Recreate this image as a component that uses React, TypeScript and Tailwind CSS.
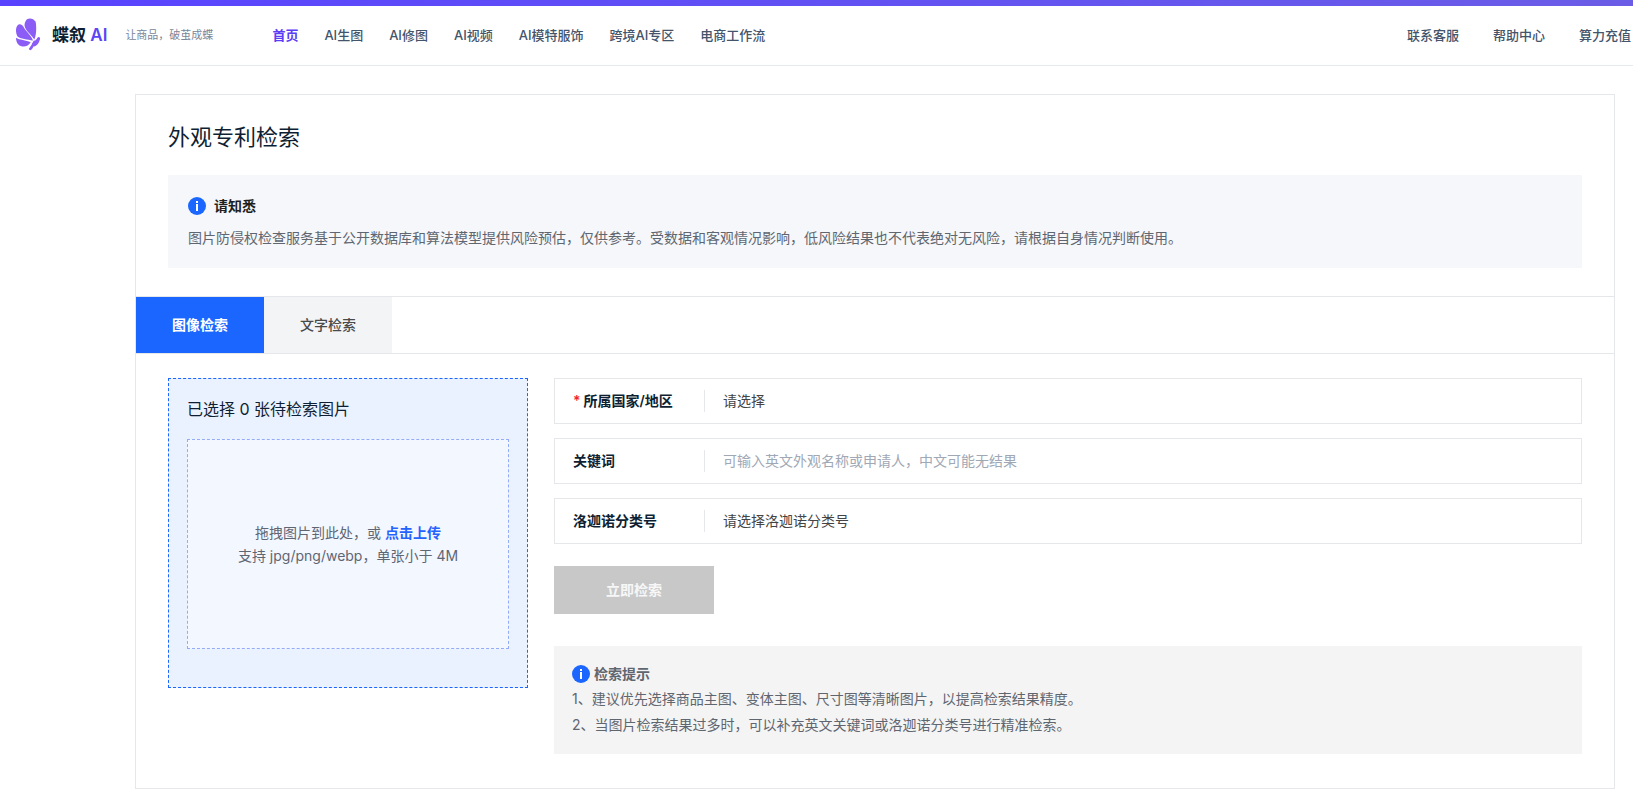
import type { ReactNode } from "react";

const navItems = ["首页", "AI生图", "AI修图", "AI视频", "AI模特服饰", "跨境AI专区", "电商工作流"];
const helpItems = ["联系客服", "帮助中心", "算力充值"];

function Logo() {
  return (
    <svg className="h-[33px] w-7" viewBox="48 56 84 98" fill="#8b5cf6" aria-hidden="true">
      <path d="M76 67C79 54 99 53 107 67C110 84 109 106 103 120C96 107 77 94 74 80C73 75 74 71 76 67Z" />
      <path d="M53 77C60 71 68 77 73 86C80 98 94 107 99 123C84 119 60 119 52 110C46 99 47 83 53 77Z" />
      <path d="M48 115C58 122 78 122 92 128C87 137 78 142 67 141C54 139 48 128 48 115Z" />
      <path
        d="M91 148C96 143 97 137 104 130C109 126 113 122 116 117"
        fill="none"
        stroke="#8b5cf6"
        strokeWidth="8"
        strokeLinecap="round"
      />
      <path d="M95 134L102 122L107 126L117 114L120 118C118 128 113 138 103 141Z" />
    </svg>
  );
}

function InfoIcon() {
  return (
    <svg className="size-[18px] shrink-0" viewBox="0 0 18 18" aria-hidden="true">
      <circle cx="9" cy="9" r="9" fill="#1a66ff" />
      <rect x="8" y="4" width="2" height="2" fill="#fff" />
      <rect x="8" y="7" width="2" height="7" fill="#fff" />
    </svg>
  );
}

function Header() {
  return (
    <header>
      <div className="h-1.5 bg-linear-to-r from-[#5842ff] to-[#6b5ce7]" />
      <div className="flex h-[60px] items-center border-b border-[#e5e9f0] pl-4 pr-[2px] pb-[2px]">
        <a href="#" className="flex items-center">
          <Logo />
          <span className="ml-2 text-[17px] font-semibold text-[#0f1f33]">
            蝶叙 <span className="text-[#5b45f5]">AI</span>
          </span>
        </a>
        <span className="ml-[18px] text-[11px] text-[#7b8698]">让商品，破茧成蝶</span>

        <nav className="ml-[59px] flex gap-[26px] text-[13px] font-medium text-[#43546b]">
          {navItems.map((item, i) => (
            <a key={item} href="#" className={i === 0 ? "font-semibold text-[#5b3df5]" : "hover:text-[#5b3df5]"}>
              {item}
            </a>
          ))}
        </nav>

        <div className="ml-auto flex gap-[34px] text-[13px] font-medium text-[#43546b]">
          {helpItems.map((item) => (
            <a key={item} href="#" className="hover:text-[#5b3df5]">
              {item}
            </a>
          ))}
        </div>
      </div>
    </header>
  );
}

function Field({ id, label, required, children }: { id: string; label: string; required?: boolean; children: ReactNode }) {
  return (
    <div className="flex h-[46px] items-center border border-[#e5e7eb] px-[18px]">
      <label htmlFor={id} className="w-[131px] shrink-0 font-semibold text-[#0f1f33]">
        {required && <span className="mr-[3px] text-[#f5222d]">*</span>}
        {label}
      </label>
      <div className="flex h-[22px] flex-1 items-center border-l border-[#e5e7eb] pl-[18px]">{children}</div>
    </div>
  );
}

export default function App() {
  return (
    <div className="min-h-screen bg-white font-[Inter,'Noto_Sans_CJK_SC',sans-serif] text-[14px] leading-[22px]">
      <Header />

      <main className="mt-7 ml-[135px] mr-[18px] border border-[#e5e7eb]">
        <section className="px-8 pt-6 pb-7">
          <h1 className="text-[22px] leading-9 text-[#0f1f33]">外观专利检索</h1>
          <div className="mt-5 bg-[#f5f7fa] px-5 pt-5 pb-[18px]">
            <div className="flex items-center gap-2 font-semibold text-[#1f1f1f]">
              <InfoIcon />
              请知悉
            </div>
            <p className="mt-[9px] leading-6 text-[#5f6670]">
              图片防侵权检查服务基于公开数据库和算法模型提供风险预估，仅供参考。受数据和客观情况影响，低风险结果也不代表绝对无风险，请根据自身情况判断使用。
            </p>
          </div>
        </section>

        <div className="flex h-[58px] border-y border-[#e5e7eb]" role="tablist">
          <button role="tab" aria-selected="true" className="w-32 bg-[#1a66ff] font-semibold text-white">
            图像检索
          </button>
          <button role="tab" aria-selected="false" className="w-32 bg-[#f3f4f6] font-medium text-[#4a4a4a]">
            文字检索
          </button>
        </div>

        <section className="flex items-start gap-[26px] px-8 pt-6 pb-[34px]">
          <div className="h-[310px] w-[360px] shrink-0 border border-dashed border-[#1a66ff] bg-[#eaf1ff] p-[18px]">
            <h2 className="text-base leading-6 text-[#0f1f33]">已选择 0 张待检索图片</h2>
            <div className="mt-[18px] flex h-[210px] flex-col items-center justify-center border border-dashed border-[#93abf8] bg-[#f3f7ff] leading-[23px] text-[#5f6673]">
              <p>
                拖拽图片到此处，或 <button className="font-semibold text-[#2563ff]">点击上传</button>
              </p>
              <p>支持 jpg/png/webp，单张小于 4M</p>
            </div>
          </div>

          <form className="flex-1">
            <div className="flex flex-col gap-[14px]">
              <Field id="country" label="所属国家/地区" required>
                <select id="country" className="w-full appearance-none text-[#444]">
                  <option>请选择</option>
                </select>
              </Field>
              <Field id="keyword" label="关键词">
                <input
                  id="keyword"
                  type="text"
                  className="w-full outline-none placeholder:text-[#a0a8b5]"
                  placeholder="可输入英文外观名称或申请人，中文可能无结果"
                />
              </Field>
              <Field id="locarno" label="洛迦诺分类号">
                <select id="locarno" className="w-full appearance-none text-[#444]">
                  <option>请选择洛迦诺分类号</option>
                </select>
              </Field>
            </div>

            <button type="button" disabled className="mt-[22px] h-12 w-40 bg-[#c8c8c8] font-semibold text-[#f7f7f7]">
              立即检索
            </button>

            <div className="mt-8 bg-[#f4f4f4] px-[18px] py-4 text-[#5f6670]">
              <div className="flex items-center gap-1 leading-6 font-semibold">
                <InfoIcon />
                检索提示
              </div>
              <p className="leading-[26px]">1、建议优先选择商品主图、变体主图、尺寸图等清晰图片，以提高检索结果精度。</p>
              <p className="leading-[26px]">2、当图片检索结果过多时，可以补充英文关键词或洛迦诺分类号进行精准检索。</p>
            </div>
          </form>
        </section>
      </main>
    </div>
  );
}
